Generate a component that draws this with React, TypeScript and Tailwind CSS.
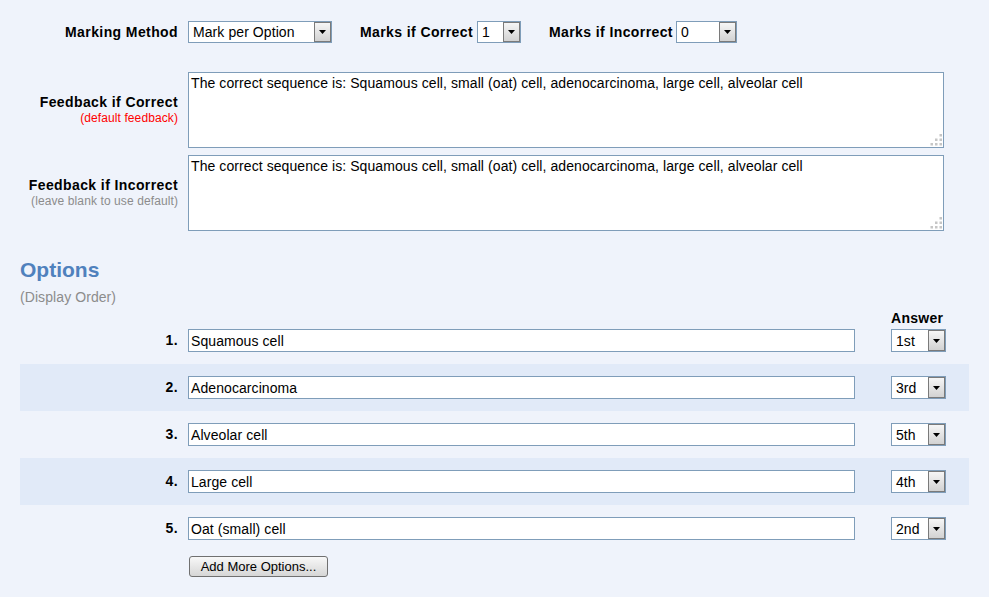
import React from 'react';

const font = "font-['Liberation_Sans',Arial,sans-serif]";

function Arrow() {
  return (
    <div className="flex h-full w-[17px] shrink-0 items-center justify-center border border-[#7a7a7a] bg-gradient-to-b from-[#f6f6f6] to-[#d2d2d2]">
      <svg width="7" height="4" viewBox="0 0 7 4">
        <path d="M0 0H7L3.5 4Z" fill="#000" />
      </svg>
    </div>
  );
}

function Select({ value, width, height = 'h-[22px]' }: { value: string; width: string; height?: string }) {
  return (
    <div className={`flex ${width} ${height} shrink-0 items-stretch border border-[#7f9db9] bg-white`}>
      <span className="flex flex-1 items-center pl-[4px] text-[14px] leading-none tracking-[0.08px] text-black">
        {value}
      </span>
      <Arrow />
    </div>
  );
}

function Grip() {
  return (
    <svg className="pointer-events-none absolute bottom-[1px] right-[1px]" width="12" height="12" viewBox="0 0 12 12">
      {[
        [9.5, 0],
        [5, 4.5],
        [9.5, 4.5],
        [0.5, 9],
        [5, 9],
        [9.5, 9],
      ].map(([x, y]) => (
        <rect key={`${x}-${y}`} x={x} y={y} width="2.5" height="2.5" fill="#c6c6c6" />
      ))}
    </svg>
  );
}

function Feedback({ label, note, noteColor, text }: { label: string; note: string; noteColor: string; text: string }) {
  return (
    <div className="flex items-center">
      <div className="w-[158px] shrink-0 text-right">
        <div className="text-[14px] font-bold leading-[16px] tracking-[0.4px]">{label}</div>
        <div className={`text-[12px] leading-[16px] tracking-[0.1px] ${noteColor}`}>{note}</div>
      </div>
      <div className="relative ml-[10px] h-[76px] w-[756px] border border-[#7f9db9] bg-white">
        <textarea
          readOnly
          defaultValue={text}
          className={`${font} block h-full w-full resize-none bg-white px-[2px] py-[2px] text-[14px] leading-[16px] tracking-[0.08px] text-black outline-none`}
        />
        <Grip />
      </div>
    </div>
  );
}

const options = [
  { n: 1, text: 'Squamous cell', answer: '1st' },
  { n: 2, text: 'Adenocarcinoma', answer: '3rd' },
  { n: 3, text: 'Alveolar cell', answer: '5th' },
  { n: 4, text: 'Large cell', answer: '4th' },
  { n: 5, text: 'Oat (small) cell', answer: '2nd' },
];

const sequence =
  'The correct sequence is: Squamous cell, small (oat) cell, adenocarcinoma, large cell, alveolar cell';

export default function App() {
  return (
    <div className={`${font} min-h-screen w-full bg-[#eff3fb] text-black`}>
      <div className="px-[20px] pb-[20px] pt-[21px]">
        {/* Marking settings */}
        <div className="flex items-center">
          <div className="w-[158px] shrink-0 text-right text-[14px] font-bold tracking-[0.4px]">Marking Method</div>
          <div className="ml-[10px]">
            <Select value="Mark per Option" width="w-[144px]" />
          </div>
          <div className="ml-[28px] text-[14px] font-bold tracking-[0.4px]">Marks if Correct</div>
          <div className="ml-[4px]">
            <Select value="1" width="w-[44px]" />
          </div>
          <div className="ml-[28px] text-[14px] font-bold tracking-[0.4px]">Marks if Incorrect</div>
          <div className="ml-[3px]">
            <Select value="0" width="w-[61px]" />
          </div>
        </div>

        {/* Feedback */}
        <div className="mt-[29px] flex flex-col gap-[7px]">
          <Feedback label="Feedback if Correct" note="(default feedback)" noteColor="text-[#ff0000]" text={sequence} />
          <Feedback
            label="Feedback if Incorrect"
            note="(leave blank to use default)"
            noteColor="text-[#8c8c8c]"
            text={sequence}
          />
        </div>

        {/* Options */}
        <h2 className="mt-[27px] text-[21px] font-bold leading-[24px] text-[#4f81bd]">Options</h2>
        <div className="mt-[7px] text-[14px] leading-[16px] tracking-[0.08px] text-[#8c8c8c]">(Display Order)</div>

        <div className="mt-[5px] flex">
          <div className="ml-[871px] text-[14px] font-bold leading-[16px] tracking-[0.3px]">Answer</div>
        </div>

        <div className="flex flex-col">
          {options.map((o, i) => (
            <div
              key={o.n}
              className={`flex items-center ${i === 0 ? 'pt-[3px]' : 'pt-[12px]'} pb-[12px] ${
                i % 2 === 1 ? 'bg-[#e1eaf8]' : ''
              }`}
            >
              <div className="w-[158px] shrink-0 text-right text-[14px] font-bold tracking-[0.4px]">{o.n}.</div>
              <input
                readOnly
                defaultValue={o.text}
                className={`${font} ml-[10px] h-[23px] w-[667px] border border-[#7f9db9] bg-white px-[2px] text-[14px] tracking-[0.08px] text-black outline-none`}
              />
              <div className="ml-[36px]">
                <Select value={o.answer} width="w-[55px]" height="h-[23px]" />
              </div>
            </div>
          ))}
        </div>

        <button
          type="button"
          className={`${font} ml-[169px] mt-[4px] h-[21px] w-[139px] rounded-[3px] border border-[#707070] bg-gradient-to-b from-[#f8f8f8] to-[#d6d6d6] text-[13px] leading-none text-black`}
        >
          Add More Options...
        </button>
      </div>
    </div>
  );
}
